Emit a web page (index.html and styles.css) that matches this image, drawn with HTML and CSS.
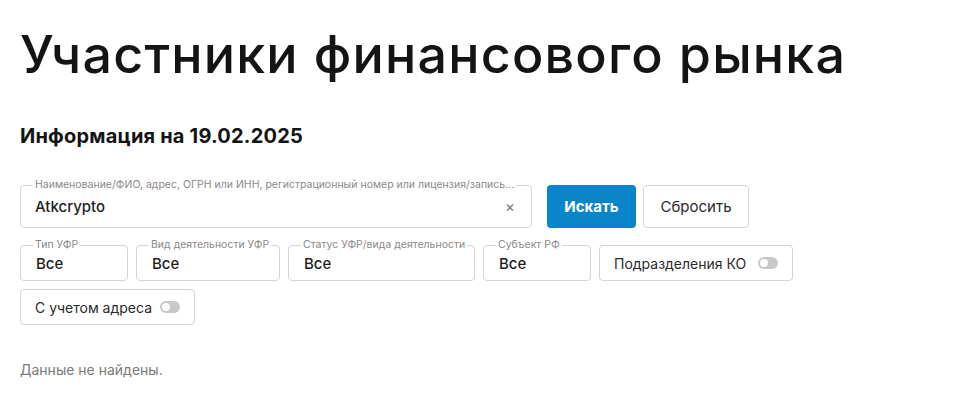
FILE: index.html
```html
<!DOCTYPE html>
<html lang="ru">
<head>
<meta charset="utf-8">
<title>Участники финансового рынка</title>
<link rel="stylesheet" href="styles.css">
</head>
<body>
<main class="page">
  <h1 class="title">Участники финансового рынка</h1>
  <h2 class="subtitle">Информация на 19.02.2025</h2>

  <div class="search-row">
    <div class="field field--search">
      <span class="field-label">Наименование/ФИО, адрес, ОГРН или ИНН, регистрационный номер или лицензия/запись...</span>
      <span class="field-value">Atkcrypto</span>
      <span class="clear">×</span>
    </div>
    <button class="btn btn--primary">Искать</button>
    <button class="btn btn--secondary">Сбросить</button>
  </div>

  <div class="filters">
    <div class="field field--select w-type">
      <span class="field-label">Тип УФР</span>
      <span class="field-value">Все</span>
    </div>
    <div class="field field--select w-activity">
      <span class="field-label">Вид деятельности УФР</span>
      <span class="field-value">Все</span>
    </div>
    <div class="field field--select w-status">
      <span class="field-label">Статус УФР/вида деятельности</span>
      <span class="field-value">Все</span>
    </div>
    <div class="field field--select w-region">
      <span class="field-label">Субъект РФ</span>
      <span class="field-value">Все</span>
    </div>
    <div class="field field--toggle w-ko">
      <span class="toggle-text">Подразделения КО</span>
      <span class="toggle"><span class="knob"></span></span>
    </div>
    <div class="field field--toggle w-addr">
      <span class="toggle-text">С учетом адреса</span>
      <span class="toggle"><span class="knob"></span></span>
    </div>
  </div>

  <p class="empty">Данные не найдены.</p>
</main>
</body>
</html>
```

FILE: styles.css
```css
* { box-sizing: border-box; }

html, body {
  margin: 0;
  padding: 0;
  background: #ffffff;
}

body {
  font-family: Inter, "Noto Sans", "Liberation Sans", sans-serif;
  color: #1a1a1a;
}

.page {
  padding: 24px 20px 0 20px;
}

.title {
  margin: 0;
  font-size: 52px;
  line-height: 62px;
  font-weight: 500;
  letter-spacing: 1.2px;
  color: #141414;
}

.subtitle {
  margin: 38px 0 0 0;
  font-size: 20px;
  line-height: 24px;
  font-weight: 700;
  letter-spacing: 0.2px;
  color: #141414;
}

.search-row {
  display: flex;
  align-items: stretch;
  margin-top: 37px;
  height: 43px;
}

.field {
  position: relative;
  border: 1px solid #d4d4d4;
  border-radius: 4px;
  background: #fff;
  display: flex;
  align-items: center;
}

.field-label {
  position: absolute;
  top: -7px;
  left: 12px;
  padding: 0 2px;
  background: #fff;
  font-size: 10.5px;
  line-height: 12px;
  color: #8a8a8a;
  white-space: nowrap;
}

.field-value {
  font-size: 15px;
  font-weight: 500;
  color: #1e1e1e;
}

.field--search {
  width: 512px;
  padding: 0 16px 0 14px;
  justify-content: space-between;
}

.clear {
  font-size: 15px;
  color: #777;
}

.btn {
  font-family: inherit;
  font-size: 15px;
  border-radius: 4px;
  cursor: pointer;
}

.btn--primary {
  margin-left: 15px;
  width: 89px;
  background: #0a85c9;
  border: none;
  color: #fff;
  font-weight: 700;
}

.btn--secondary {
  margin-left: 7px;
  width: 106px;
  background: #fff;
  border: 1px solid #d4d4d4;
  color: #2a2a2a;
  font-weight: 400;
}

.filters {
  display: flex;
  flex-wrap: wrap;
  gap: 8px;
  margin-top: 17px;
  width: 790px;
}

.field--select {
  height: 36px;
  padding: 0 14px 0 15px;
}

.w-type { width: 108px; }
.w-activity { width: 144px; }
.w-status { width: 187px; }
.w-region { width: 108px; }

.field--toggle {
  height: 36px;
  padding: 0 14px 0 14px;
  justify-content: space-between;
}

.w-ko { width: 194px; }
.w-addr { width: 175px; }

.toggle-text {
  font-size: 14px;
  color: #2a2a2a;
  white-space: nowrap;
}

.toggle {
  flex: none;
  width: 20px;
  height: 12px;
  border-radius: 6px;
  background: #c8c8c8;
  position: relative;
  display: inline-block;
}

.knob {
  position: absolute;
  top: 2px;
  left: 2px;
  width: 8px;
  height: 8px;
  border-radius: 50%;
  background: #fff;
}

.empty {
  margin: 35px 0 0 0;
  font-size: 14px;
  line-height: 20px;
  color: #7a7a7a;
}
```
